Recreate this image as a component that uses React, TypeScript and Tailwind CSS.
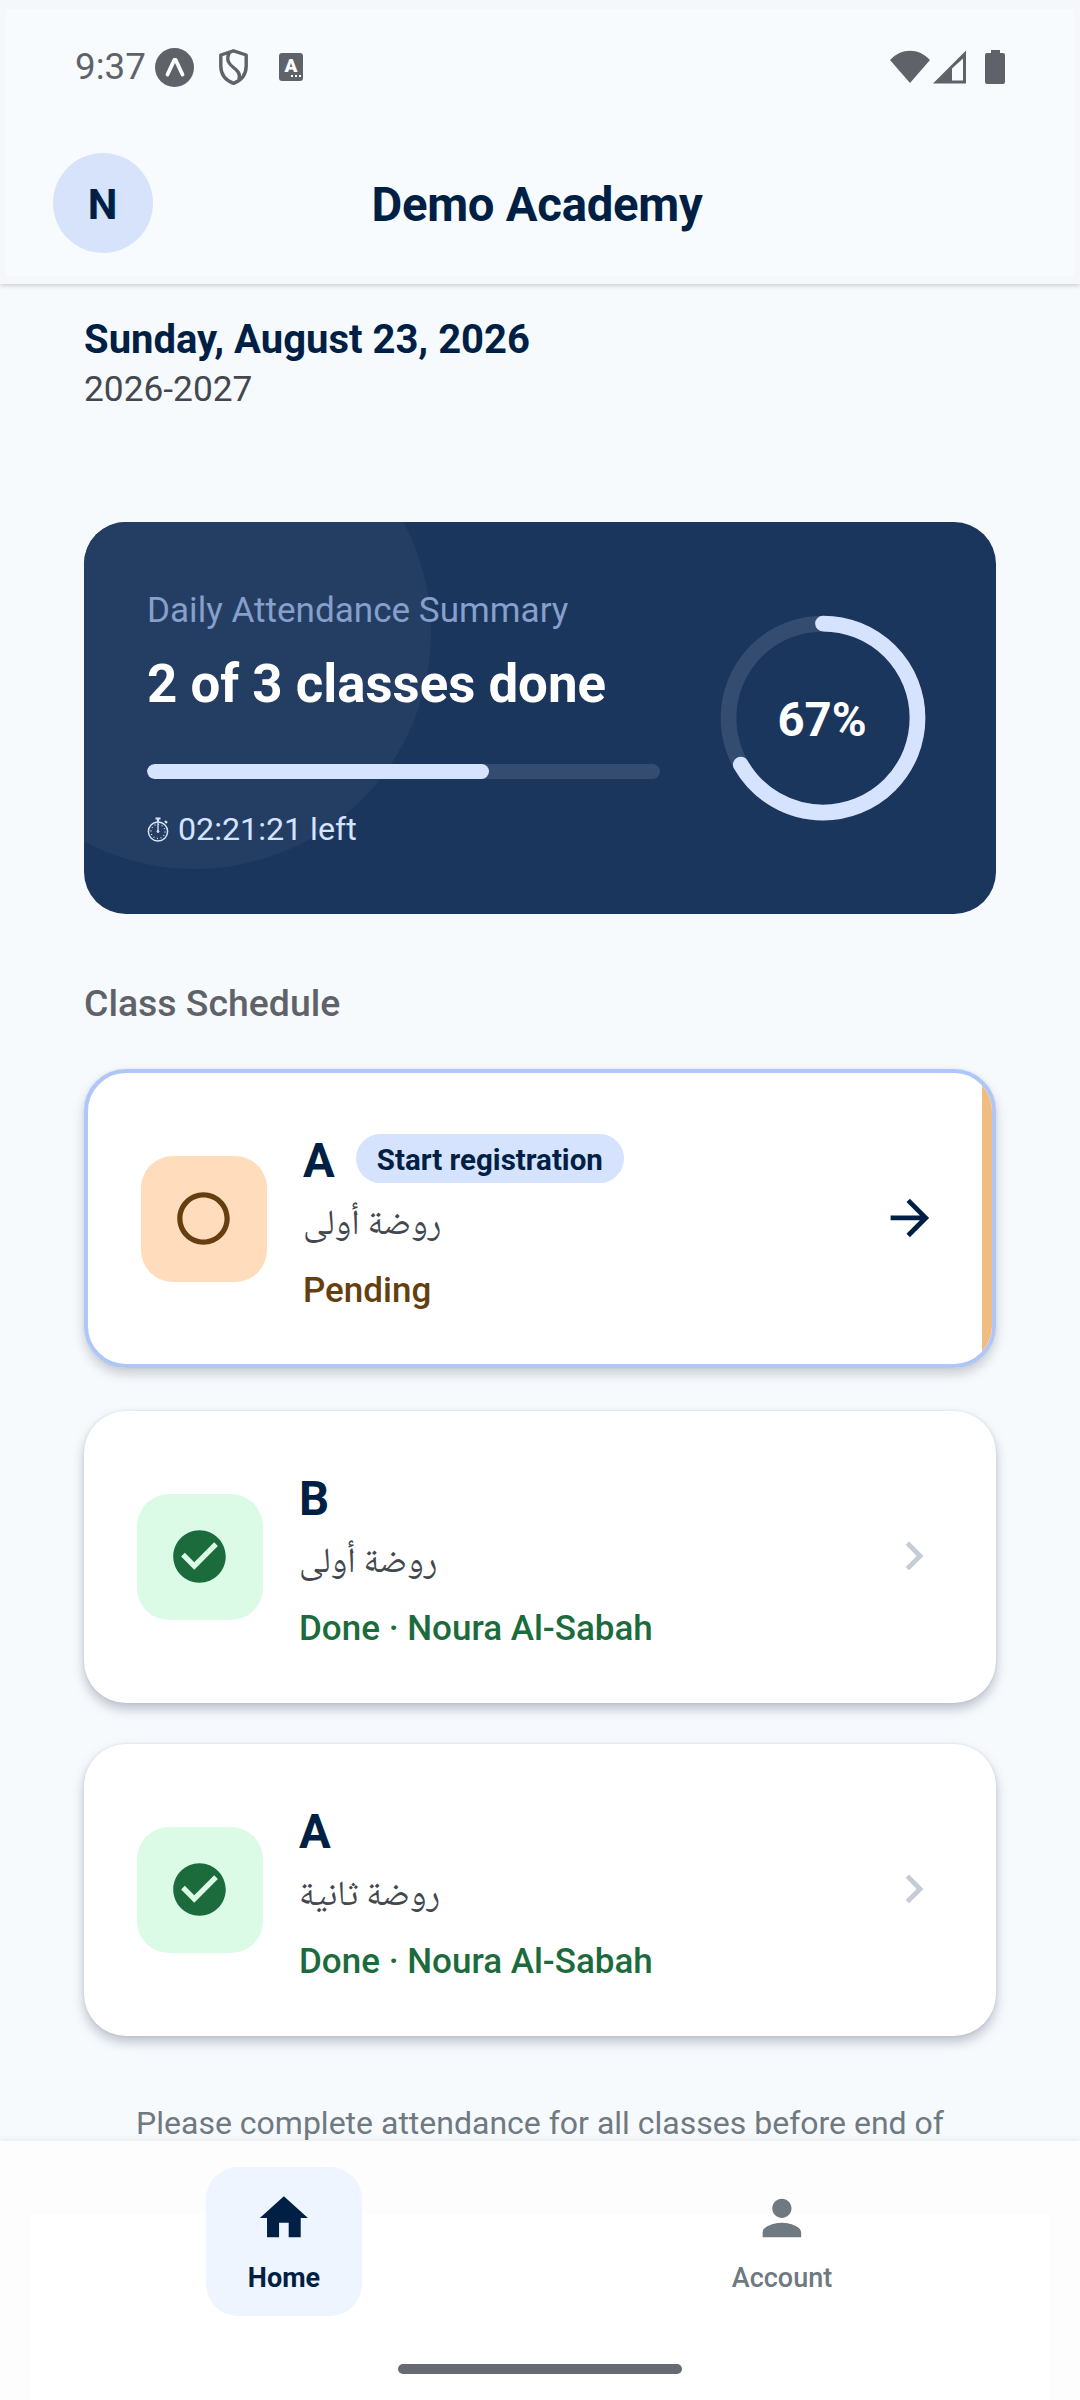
import type { ReactNode } from "react";

type ClassItem = {
  name: string;
  level: string;
  status: string;
  done: boolean;
  badge?: string;
};

const classes: ClassItem[] = [
  { name: "A", level: "روضة أولى", status: "Pending", done: false, badge: "Start registration" },
  { name: "B", level: "روضة أولى", status: "Done · Noura Al-Sabah", done: true },
  { name: "A", level: "روضة ثانية", status: "Done · Noura Al-Sabah", done: true },
];

function Icon({ d, className }: { d: string; className: string }) {
  return (
    <svg viewBox="0 0 24 24" fill="currentColor" className={className}>
      <path d={d} />
    </svg>
  );
}

const paths = {
  pending:
    "M12 2C6.48 2 2 6.48 2 12s4.48 10 10 10 10-4.48 10-10S17.52 2 12 2zm0 18c-4.42 0-8-3.58-8-8s3.58-8 8-8 8 3.58 8 8-3.58 8-8 8z",
  done: "M12 2C6.48 2 2 6.48 2 12s4.48 10 10 10 10-4.48 10-10S17.52 2 12 2zm-2 15l-5-5 1.41-1.41L10 14.17l7.59-7.59L19 8l-9 9z",
  arrow: "M12 4l-1.41 1.41L16.17 11H4v2h12.17l-5.58 5.59L12 20l8-8z",
  chevron: "M10 6L8.59 7.41 13.17 12l-4.58 4.59L10 18l6-6z",
  home: "M10 20v-6h4v6h5v-8h3L12 3 2 12h3v8z",
  person:
    "M12 12c2.21 0 4-1.79 4-4s-1.79-4-4-4-4 1.79-4 4 1.79 4 4 4zm0 2c-2.67 0-8 1.34-8 4v2h16v-2c0-2.66-5.33-4-8-4z",
};

function StatusBar() {
  return (
    <div className="flex h-[42px] items-center px-[69px] text-[#5f6369]">
      <span className="w-[80px] text-[36.75px] leading-[42px]">9:37</span>
      <svg viewBox="0 0 39 39" className="size-[39px]">
        <circle cx="19.5" cy="19.5" r="19.5" fill="currentColor" />
        <path
          d="M12.5 26.5 19.3 12h1.4l6.8 14.5"
          fill="none"
          stroke="#fff"
          strokeWidth="3.8"
          strokeLinejoin="round"
          strokeLinecap="round"
        />
      </svg>
      <svg viewBox="0 0 29 36" className="ml-[25px] h-[36px] w-[29px]" fill="none" stroke="currentColor" strokeWidth="3.4">
        <path d="M14.5 1.8 27.2 6v11c0 8.5-5.2 14.5-12.7 17.4C7 31.5 1.8 25.5 1.8 17V6z" strokeLinejoin="round" />
        <path d="M10.5 3.5C6.5 11 10 15 14.5 18.5s7 6 5.5 12.5" />
      </svg>
      <span className="ml-[31px] flex h-[28px] w-[24px] flex-col items-center rounded-[3px] bg-[#5f6369] text-white">
        <span className="mt-[3px] text-[19px] font-black leading-[20px]">A</span>
        <span className="-mt-px flex gap-[2px] self-end pr-[2px]">
          <i className="size-[2px] bg-white" />
          <i className="size-[2px] bg-white" />
          <i className="size-[2px] bg-white" />
        </span>
      </span>
      <div className="ml-auto flex items-center">
        <svg viewBox="0 0 40 34" className="h-[34px] w-[40px]" fill="currentColor">
          <path d="M0 10C11-2.5 29-2.5 40 10L20 33z" />
        </svg>
        <svg viewBox="0 0 33 34" className="ml-[3px] h-[34px] w-[33px]" fill="currentColor" fillRule="evenodd">
          <path d="M0 33.5 33 .5v33zM19 18.5v12h11V8.5z" />
        </svg>
        <svg viewBox="0 0 20 34" className="ml-[19px] h-[34px] w-[20px]" fill="currentColor">
          <path d="M6 0h9v3h3a2 2 0 0 1 2 2v27a2 2 0 0 1-2 2H2a2 2 0 0 1-2-2V5a2 2 0 0 1 2-2h4z" />
        </svg>
      </div>
    </div>
  );
}

function Stopwatch() {
  return (
    <svg viewBox="0 0 22 27" className="h-[27px] w-[22px]" fill="none" stroke="currentColor">
      <circle cx="11" cy="15.5" r="9.6" strokeWidth="1.5" />
      <circle cx="11" cy="15.5" r="7" strokeWidth="1.3" strokeDasharray="1 2.66" />
      <path d="M11 7v8.5" strokeWidth="1.3" />
      <circle cx="11" cy="15.5" r="1" fill="currentColor" />
      <path d="M8.5 2.5h5M11 2v4M18 5l2 2" strokeWidth="2.2" />
    </svg>
  );
}

function Summary() {
  const done = classes.filter((c) => c.done).length;
  const ratio = done / classes.length;
  const length = 2 * Math.PI * 94.5;

  return (
    <section className="relative mt-[113px] flex h-[392px] justify-between overflow-hidden rounded-[42px] bg-[#1b365d] px-[63px]">
      <div className="absolute -left-[126px] -top-[126px] size-[473px] rounded-full bg-[#233e62]" />
      <div className="relative w-[513px] pt-[68px]">
        <p className="text-[35.1px] leading-[40px] text-[#869fcb]">Daily Attendance Summary</p>
        <p className="mt-[23px] whitespace-nowrap text-[52.8px] font-bold leading-[62px] text-white">
          {done} of {classes.length} classes done
        </p>
        <div className="mt-[49px] h-[15px] overflow-hidden rounded-full bg-[#344c70]">
          <div className="h-full rounded-full bg-[#d6e3ff]" style={{ width: `${ratio * 100}%` }} />
        </div>
        <p className="mt-[31px] flex items-center gap-[9px] text-[32.2px] leading-[38px] text-[#d6e3ff]">
          <Stopwatch />
          02:21:21 left
        </p>
      </div>
      <div className="relative flex size-[220px] items-center justify-center self-center">
        <svg viewBox="0 0 220 220" className="absolute inset-0 -rotate-90" fill="none" strokeWidth="15.75">
          <circle cx="110" cy="110" r="94.5" stroke="#344c70" />
          <circle
            cx="110"
            cy="110"
            r="94.5"
            stroke="#d6e3ff"
            strokeLinecap="round"
            strokeDasharray={`${length * ratio} ${length}`}
          />
        </svg>
        <span className="relative mr-[2px] mt-[4px] text-[47.25px] font-bold leading-[56px] text-white">
          {Math.round(ratio * 100)}%
        </span>
      </div>
    </section>
  );
}

function ClassCard({ item }: { item: ClassItem }) {
  return (
    <article
      className={
        item.done
          ? "flex h-[292px] items-center rounded-[42px] bg-white px-[53px] shadow-[0_6px_12px_rgba(30,45,80,0.28),0_0_3px_rgba(30,45,80,0.1)]"
          : "relative flex h-[299px] items-center overflow-hidden rounded-[42px] border-4 border-[#aec6f8] bg-white px-[53px]"
      }
    >
      {!item.done && <div className="absolute inset-y-0 right-0 w-[10px] bg-[#f0bc82]" />}
      <div
        className={
          item.done
            ? "flex size-[126px] items-center justify-center rounded-[32px] bg-[#dcfbe7] text-[#1b6b3c]"
            : "flex size-[126px] items-center justify-center rounded-[32px] bg-[#ffdcbb] text-[#653f10]"
        }
      >
        <Icon d={item.done ? paths.done : paths.pending} className="mb-px mr-[2px] size-[63px]" />
      </div>
      <div className="ml-[36px] self-start pt-[60px]">
        <div className="flex h-[56px] items-center">
          <h3 className="text-[47.25px] font-bold leading-[56px] text-[#001f44]">{item.name}</h3>
          {item.badge && (
            <span className="-mt-[5px] ml-[21px] flex h-[49px] items-center rounded-full bg-[#d6e3ff] px-[21px] pt-[2px] text-[29.5px] font-bold leading-[34px] text-[#001f44]">
              {item.badge}
            </span>
          )}
        </div>
        <p
          dir="rtl"
          className="mt-[9px] h-[56px] w-fit font-['Noto_Naskh_Arabic','Roboto','Noto_Sans_Arabic',sans-serif] text-[35.3px] leading-[56px] text-[#43474e]"
        >
          {item.level}
        </p>
        <p
          className={
            item.done
              ? "mt-[17px] text-[35px] font-medium leading-[40px] text-[#1b6b3c]"
              : "mt-[17px] text-[35px] font-medium leading-[40px] text-[#653f10]"
          }
        >
          {item.status}
        </p>
      </div>
      <Icon
        d={item.done ? paths.chevron : paths.arrow}
        className={
          item.done
            ? "mb-[2px] ml-auto size-[57.75px] text-[#c4ccd6]"
            : "mb-[2px] ml-auto size-[57.75px] text-[#001f44]"
        }
      />
    </article>
  );
}

function NavItem({ active, icon, children }: { active?: boolean; icon: string; children: ReactNode }) {
  return (
    <div
      className={
        active
          ? "flex h-[149px] w-[156px] flex-col items-center rounded-[32px] bg-[#eff5ff] pt-[22px] font-bold text-[#001f44]"
          : "flex h-[149px] w-[156px] flex-col items-center pt-[22px] font-medium text-[#6f7982]"
      }
    >
      <Icon d={icon} className="size-[57.75px]" />
      <span className="mt-[14px] text-[27px] leading-[34px]">{children}</span>
    </div>
  );
}

export default function App() {
  return (
    <div className="flex h-[2400px] w-[1080px] flex-col overflow-hidden bg-[#f7fafd] font-['Roboto','Noto_Sans_Arabic','DejaVu_Sans',sans-serif]">
      <header className="relative z-10 h-[284px] shrink-0 border-x-[6px] border-b-8 border-t-[9px] border-[#f5f7fb] bg-[#f7fbfe] pt-[37px] shadow-[0_1px_5px_rgba(0,0,0,0.22)]">
        <StatusBar />
        <div className="mt-[65px] flex items-center px-[47px]">
          <div className="flex size-[100px] items-center justify-center rounded-full bg-[#d6e3fb] pr-px pt-[3px] text-[42px] font-bold text-[#001f44]">
            N
          </div>
          <h1 className="flex-1 pt-[3px] text-center text-[47.25px] font-bold leading-[56px] tracking-[-0.25px] text-[#001f44]">
            Demo Academy
          </h1>
          <div className="w-[106px]" />
        </div>
      </header>

      <main className="min-h-0 flex-1 overflow-hidden px-[84px] pt-[33px]">
        <p className="text-[40px] font-bold leading-[46px] text-[#001f44]">Sunday, August 23, 2026</p>
        <p className="mt-[6px] text-[35.3px] leading-[40px] text-[#43474e]">2026-2027</p>

        <Summary />

        <h2 className="mt-[67px] text-[37.4px] font-medium leading-[44px] text-[#5f6369]">Class Schedule</h2>
        <div className="mt-[44px] flex flex-col gap-[41px]">
          {classes.map((item, i) =>
            item.done ? (
              <ClassCard key={i} item={item} />
            ) : (
              <div key={i} className="h-[301px]">
                <div className="rounded-[42px] shadow-[0_6px_12px_rgba(30,45,60,0.22),0_0_3px_rgba(30,45,60,0.08)]">
                  <ClassCard item={item} />
                </div>
              </div>
            )
          )}
        </div>

        <p className="mt-[69px] whitespace-nowrap text-center text-[32px] leading-[36px] text-[#6f7982]">
          Please complete attendance for all classes before end of
        </p>
      </main>

      <nav className="relative h-[259px] shrink-0 bg-[#fdfdfd] shadow-[0_-2px_6px_rgba(0,0,0,0.06)]">
        <div className="absolute bottom-0 left-[31px] right-[31px] top-[73px] bg-white" />
        <div className="relative flex gap-[342px] pl-[206px] pt-[26px]">
          <NavItem active icon={paths.home}>
            Home
          </NavItem>
          <NavItem icon={paths.person}>Account</NavItem>
        </div>
        <div className="relative mx-auto mt-[48px] h-[10px] w-[284px] rounded-full bg-[#656b70]" />
      </nav>
    </div>
  );
}
